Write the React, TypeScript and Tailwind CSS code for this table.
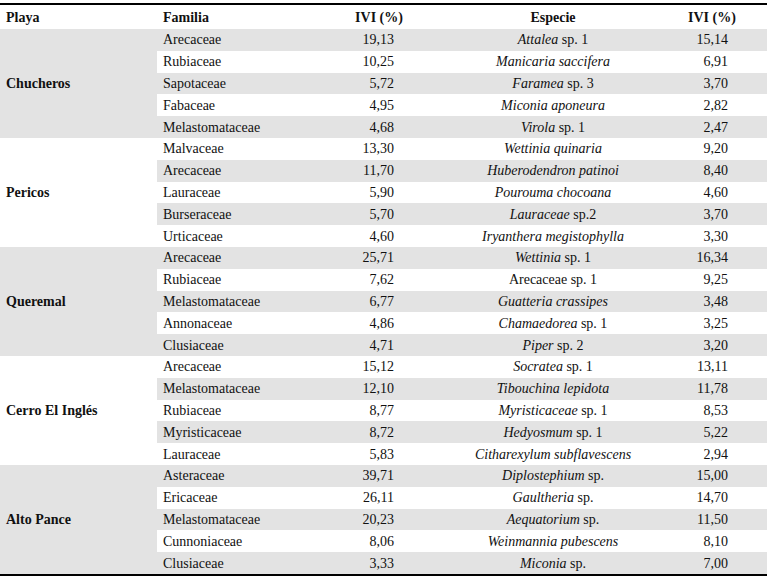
type Row = {
  familia: string
  ivi: string
  especie: [string, string]
  ivi2: string
}

type Group = { playa: string; rows: Row[] }

const groups: Group[] = [
  {
    playa: 'Chucheros',
    rows: [
      { familia: 'Arecaceae', ivi: '19,13', especie: ['Attalea', ' sp. 1'], ivi2: '15,14' },
      { familia: 'Rubiaceae', ivi: '10,25', especie: ['Manicaria saccifera', ''], ivi2: '6,91' },
      { familia: 'Sapotaceae', ivi: '5,72', especie: ['Faramea', ' sp. 3'], ivi2: '3,70' },
      { familia: 'Fabaceae', ivi: '4,95', especie: ['Miconia aponeura', ''], ivi2: '2,82' },
      { familia: 'Melastomataceae', ivi: '4,68', especie: ['Virola', ' sp. 1'], ivi2: '2,47' },
    ],
  },
  {
    playa: 'Pericos',
    rows: [
      { familia: 'Malvaceae', ivi: '13,30', especie: ['Wettinia quinaria', ''], ivi2: '9,20' },
      { familia: 'Arecaceae', ivi: '11,70', especie: ['Huberodendron patinoi', ''], ivi2: '8,40' },
      { familia: 'Lauraceae', ivi: '5,90', especie: ['Pourouma chocoana', ''], ivi2: '4,60' },
      { familia: 'Burseraceae', ivi: '5,70', especie: ['Lauraceae', ' sp.2'], ivi2: '3,70' },
      { familia: 'Urticaceae', ivi: '4,60', especie: ['Iryanthera megistophylla', ''], ivi2: '3,30' },
    ],
  },
  {
    playa: 'Queremal',
    rows: [
      { familia: 'Arecaceae', ivi: '25,71', especie: ['Wettinia', ' sp. 1'], ivi2: '16,34' },
      { familia: 'Rubiaceae', ivi: '7,62', especie: ['', 'Arecaceae sp. 1'], ivi2: '9,25' },
      { familia: 'Melastomataceae', ivi: '6,77', especie: ['Guatteria crassipes', ''], ivi2: '3,48' },
      { familia: 'Annonaceae', ivi: '4,86', especie: ['Chamaedorea', ' sp. 1'], ivi2: '3,25' },
      { familia: 'Clusiaceae', ivi: '4,71', especie: ['Piper', ' sp. 2'], ivi2: '3,20' },
    ],
  },
  {
    playa: 'Cerro El Inglés',
    rows: [
      { familia: 'Arecaceae', ivi: '15,12', especie: ['Socratea', ' sp. 1'], ivi2: '13,11' },
      { familia: 'Melastomataceae', ivi: '12,10', especie: ['Tibouchina lepidota', ''], ivi2: '11,78' },
      { familia: 'Rubiaceae', ivi: '8,77', especie: ['Myristicaceae', ' sp. 1'], ivi2: '8,53' },
      { familia: 'Myristicaceae', ivi: '8,72', especie: ['Hedyosmum', ' sp. 1'], ivi2: '5,22' },
      { familia: 'Lauraceae', ivi: '5,83', especie: ['Citharexylum subflavescens', ''], ivi2: '2,94' },
    ],
  },
  {
    playa: 'Alto Pance',
    rows: [
      { familia: 'Asteraceae', ivi: '39,71', especie: ['Diplostephium', ' sp.'], ivi2: '15,00' },
      { familia: 'Ericaceae', ivi: '26,11', especie: ['Gaultheria', ' sp.'], ivi2: '14,70' },
      { familia: 'Melastomataceae', ivi: '20,23', especie: ['Aequatorium', ' sp.'], ivi2: '11,50' },
      { familia: 'Cunnoniaceae', ivi: '8,06', especie: ['Weinmannia pubescens', ''], ivi2: '8,10' },
      { familia: 'Clusiaceae', ivi: '3,33', especie: ['Miconia', ' sp.'], ivi2: '7,00' },
    ],
  },
]

export default function App() {
  return (
    <div className="h-[579px] w-[767px] bg-white pt-[3px] [font-family:'Liberation_Serif',serif] text-[14px] text-[#111]">
      <div className="border-t-2 border-b-2 border-black">
        {/* Header */}
        <div className="flex h-[24px] items-center whitespace-nowrap font-bold">
          <div className="w-[157px] pl-[6px]">Playa</div>
          <div className="w-[183px] pl-[6px]">Familia</div>
          <div className="w-[78px] text-center">IVI (%)</div>
          <div className="w-[270px] text-center">Especie</div>
          <div className="w-[47px] text-center">IVI (%)</div>
        </div>

        {groups.map((g, gi) => (
          <div key={g.playa} className="flex">
            <div
              className={`flex w-[157px] items-center pl-[6px] font-bold ${
                gi % 2 === 0 ? 'bg-[#e3e3e3]' : 'bg-white'
              }`}
            >
              {g.playa}
            </div>
            <div className="flex-1">
              {g.rows.map((r, ri) => {
                const shaded = (gi * 5 + ri) % 2 === 0
                return (
                  <div
                    key={ri}
                    className={`flex h-[21.8px] items-center whitespace-nowrap ${shaded ? 'bg-[#e3e3e3]' : 'bg-white'}`}
                  >
                    <div className="w-[183px] pl-[6px]">{r.familia}</div>
                    <div className="w-[78px] pr-[24px] text-right">{r.ivi}</div>
                    <div className="w-[270px] text-center">
                      {r.especie[0] && <i>{r.especie[0]}</i>}
                      {r.especie[1]}
                    </div>
                    <div className="w-[79px] pr-[39px] text-right">{r.ivi2}</div>
                  </div>
                )
              })}
            </div>
          </div>
        ))}
      </div>
    </div>
  )
}
